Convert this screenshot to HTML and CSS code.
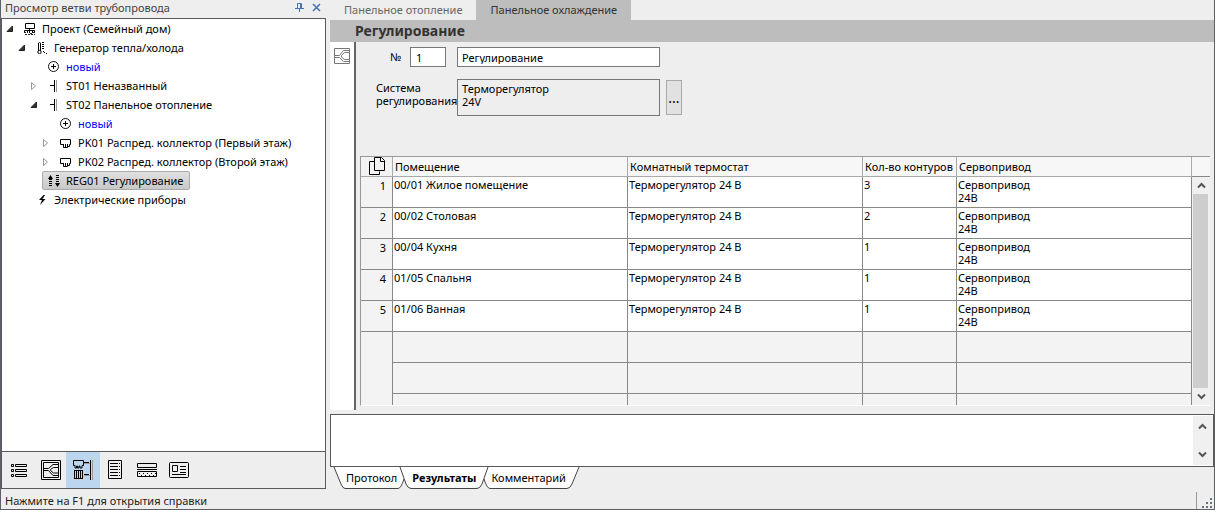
FILE: index.html
```html
<!DOCTYPE html>
<html lang="ru">
<head>
<meta charset="utf-8">
<title>Регулирование</title>
<link rel="stylesheet" href="styles.css">
</head>
<body>
<svg class="defs" aria-hidden="true">
  <symbol id="open" viewBox="0 0 8 8"><path d="M6.500 1v5.500H1z" fill="#333" stroke="#222"/></symbol>
  <symbol id="closed" viewBox="0 0 8 8"><path d="M1.500 .5v7L5.500 4z" fill="#fff" stroke="#999"/></symbol>
  <symbol id="plus" viewBox="0 0 12 12"><circle cx="5.500" cy="5.500" r="5" fill="none" stroke="#111"/><path d="M3 5.500h5M5.500 3v5" stroke="#000"/></symbol>
  <symbol id="branch" viewBox="0 0 12 12"><path d="M2 5.500h5M6.500 0v12" stroke="#000"/><path d="M8.500 0v12" stroke="#999"/></symbol>
  <symbol id="manifold" viewBox="0 0 12 12"><path d="M.5 2.500h10v5H9.500v2H7.500V7v3.500H5.500V7v3.500H3.500V7v.5H.5z" fill="none" stroke="#000"/></symbol>
  <symbol id="valve" viewBox="0 0 20 20"><path d="M.5.500h19v19H.5zM2.500 2.500h15v15h-15z" fill="none" stroke="currentColor"/><path d="M3 8.500h4.500L12 4.500h5M3 10.500h4.500L12 15.500h5M17 7.500h-4.500L9.500 9.500v1l3 2.500h4.500" fill="none" stroke="currentColor"/></symbol>
  <symbol id="up" viewBox="0 0 9 7"><path d="M1 5.500l3.500-3.500L8 5.500" fill="none" stroke="#555" stroke-width="2"/></symbol>
  <symbol id="down" viewBox="0 0 9 7"><path d="M1 1.500L4.500 5L8 1.500" fill="none" stroke="#555" stroke-width="2"/></symbol>
</svg>
<div class="window">
  <div class="workspace">
    <aside class="sidebar">
      <header class="panel-title">
        <span class="panel-name">Просмотр ветви трубопровода</span>
        <button class="plain" aria-label="Закрепить"><svg width="9" height="9"><path d="M2.500 5V.5h4V5M5.500 1v4M0 5.500h9M4.500 6v3" fill="none" stroke="#4472ad"/></svg></button>
        <button class="plain" aria-label="Закрыть"><svg width="9" height="9"><path d="M1 1l7 7M8 1L1 8" stroke="#4472ad" stroke-width="1.500"/></svg></button>
      </header>
      <ul class="tree">
        <li class="node l0"><svg class="arrow"><use href="#open"/></svg><svg class="ico"><path d="M1.500.5h9v5h-9zM.5 10V7.500h10V10M5.500 5.500v4.500M3.500 7.500V10M8.500 7.500V10" fill="none" stroke="#000"/><path d="M0 9.500h2M1 11.500h2M3 9.500h1M4 11.500h2M6 10.500h2M7 11.500h2M9 9.500h2M10 11.500h1" stroke="#222"/></svg><span>Проект (Семейный дом)</span></li>
        <li class="node l1"><svg class="arrow"><use href="#open"/></svg><svg class="ico"><path d="M2.500 9V1q1-1.500 2 0v8" fill="none" stroke="#000"/><circle cx="3.500" cy="10" r="1.700" fill="#fff" stroke="#000"/><path d="M6 .5h2M6 2.500h2M6 4.500h2M6 6.500h2M7 9.500h1M8 10.500h1M10 11.500h1" stroke="#000"/></svg><span>Генератор тепла/холода</span></li>
        <li class="node l2 new"><svg class="arrow"></svg><svg class="ico"><use href="#plus"/></svg><span>новый</span></li>
        <li class="node l2"><svg class="arrow"><use href="#closed"/></svg><svg class="ico"><use href="#branch"/></svg><span>ST01 Неназванный</span></li>
        <li class="node l2"><svg class="arrow"><use href="#open"/></svg><svg class="ico"><use href="#branch"/></svg><span>ST02 Панельное отопление</span></li>
        <li class="node l3 new"><svg class="arrow"></svg><svg class="ico"><use href="#plus"/></svg><span>новый</span></li>
        <li class="node l3"><svg class="arrow"><use href="#closed"/></svg><svg class="ico"><use href="#manifold"/></svg><span>PK01 Распред. коллектор (Первый этаж)</span></li>
        <li class="node l3"><svg class="arrow"><use href="#closed"/></svg><svg class="ico"><use href="#manifold"/></svg><span>PK02 Распред. коллектор (Второй этаж)</span></li>
        <li class="node l2 selected"><svg class="ico"><path d="M2.500 0L0 4h5zM9.500 12L7 8h5z"/><path d="M2.500 4v8M9.500 0v8" stroke="#000" stroke-width="3" stroke-dasharray="1 1"/></svg><span>REG01 Регулирование</span></li>
        <li class="node l1"><svg class="arrow"></svg><svg class="ico"><path d="M7.500 1L3 6h3L4 11L9.500 5H6.500L9 1z"/></svg><span>Электрические приборы</span></li>
      </ul>
      <nav class="tools" aria-label="Виды">
        <button class="tool" aria-label="Список"><svg width="20" height="20"><path d="M2.500 4.500h2v2h-2zM2.500 9.500h2v2h-2zM2.500 14.500h2v2h-2zM6.500 4.500h11v2h-11zM6.500 9.500h11v2h-11zM6.500 14.500h11v2h-11z" fill="none" stroke="#000"/></svg></button>
        <button class="tool" aria-label="Контуры"><svg width="20" height="20"><use href="#valve"/></svg></button>
        <button class="tool current" aria-label="Ветви"><svg width="20" height="20"><path d="M11 3.500h7M11 15.500h7M19.500 0v20" stroke="#999"/><path d="M.5.5h10v5H9V8H7V6H6v2H4.500V6H3.500v2H2V5.500H.5zM11 2.500h5M11 14.500h5M17.500 0v20" fill="none" stroke="#000"/><path d="M1.500 10v9M3.500 10v9M5.500 10v9M7.500 10v9M9.500 10v9M1 10.500h9M1 18.500h9" stroke="#000"/></svg></button>
        <button class="tool" aria-label="Отчёт"><svg width="20" height="20"><path d="M3.500.5h13v18h-13z" fill="none" stroke="#000"/><path d="M5 3.500h8M5 6.500h8M5 9.500h8M5 12.500h8M5 15.500h8M14 3.500h1M14 6.500h1M14 9.500h1M14 12.500h1M14 15.500h1" stroke="#000"/></svg></button>
        <button class="tool" aria-label="Слои"><svg width="20" height="20"><path d="M.5 3.500h19v4H.5zM0 9.500h20M.5 11.500h19v5H.5z" fill="none" stroke="#000"/><path d="M2 13.500h17M4 15.500h14" stroke="#000" stroke-dasharray="1 3"/></svg></button>
        <button class="tool" aria-label="Карточка"><svg width="20" height="20"><rect x=".5" y="2.500" width="19" height="15" rx="1" fill="none" stroke="#000"/><path d="M3.500 5.500h5v6h-5zM11 6.500h6M11 9.500h6M11 12.500h6M3 14.500h14" fill="none" stroke="#000"/></svg></button>
      </nav>
    </aside>
    <main class="main">
      <div class="tabs" role="tablist">
        <button class="tab" role="tab" aria-selected="false">Панельное отопление</button>
        <button class="tab active" role="tab" aria-selected="true">Панельное охлаждение</button>
      </div>
      <h1 class="heading">Регулирование</h1>
      <div class="editor">
        <div class="rail"><svg width="16" height="16" class="rail-icon"><path d="M.5.5h15v15H.5zM1 7.500h4.500L9.500 2.500H15M1 9.500h4.500L9.500 13.500H15M15 4.500h-4.500L7.500 7.500v1.500L10.500 11.500H15" fill="none" stroke="currentColor"/></svg></div>
        <div class="content">
          <form class="form">
            <label class="label num" for="no">№</label>
            <div class="fields"><input class="box short" id="no" value="1"><input class="box name" aria-label="Название" value="Регулирование"></div>
            <label class="label system" for="sys">Система регулирования</label>
            <div class="fields second"><textarea class="box area" id="sys" readonly>Терморегулятор
24V</textarea><button class="more" type="button">...</button></div>
          </form>
          <div class="grid">
            <table class="table">
              <thead><tr><th class="rowno"><svg width="17" height="19"><path d="M5.500 4.500h-5v13h10v-3" fill="none" stroke="#000"/><path d="M5.500.5h7l3 3v10h-10zM11.500 1v3.500h4" fill="none" stroke="#000"/></svg></th><th>Помещение</th><th>Комнатный термостат</th><th class="loops">Кол-во контуров</th><th>Сервопривод</th></tr></thead>
              <tbody>
                <tr><td class="rowno">1</td><td>00/01 Жилое помещение</td><td>Терморегулятор 24 В</td><td>3</td><td>Сервопривод<br>24В</td></tr>
                <tr><td class="rowno">2</td><td>00/02 Столовая</td><td>Терморегулятор 24 В</td><td>2</td><td>Сервопривод<br>24В</td></tr>
                <tr><td class="rowno">3</td><td>00/04 Кухня</td><td>Терморегулятор 24 В</td><td>1</td><td>Сервопривод<br>24В</td></tr>
                <tr><td class="rowno">4</td><td>01/05 Спальня</td><td>Терморегулятор 24 В</td><td>1</td><td>Сервопривод<br>24В</td></tr>
                <tr><td class="rowno">5</td><td>01/06 Ванная</td><td>Терморегулятор 24 В</td><td>1</td><td>Сервопривод<br>24В</td></tr>
                <tr class="empty"><td class="rowno" rowspan="3"></td><td></td><td></td><td></td><td></td></tr>
                <tr class="empty"><td></td><td></td><td></td><td></td></tr>
                <tr class="empty"><td></td><td></td><td></td><td></td></tr>
              </tbody>
            </table>
            <div class="scroll-col">
              <div class="corner"></div>
              <button class="scroll-btn" aria-label="Вверх"><svg width="9" height="7"><use href="#up"/></svg></button>
              <div class="thumb"></div>
              <button class="scroll-btn" aria-label="Вниз"><svg width="9" height="7"><use href="#down"/></svg></button>
            </div>
          </div>
        </div>
      </div>
      <section class="output">
        <div class="output-text"></div>
        <div class="output-scroll">
          <button class="scroll-btn" aria-label="Вверх"><svg width="9" height="7"><use href="#up"/></svg></button>
          <button class="scroll-btn" aria-label="Вниз"><svg width="9" height="7"><use href="#down"/></svg></button>
        </div>
      </section>
      <div class="sheets" role="tablist">
        <svg width="12" height="22"><path d="M1 0L8 17q2 4 4 4V0z" fill="#fff"/><path d="M1 0L8 17q2 4.500 4 4.500" fill="none" stroke="#444"/></svg>
        <button class="sheet" role="tab">Протокол</button>
        <svg width="13" height="22"><path d="M0 0h13v21q-3 0-6-9q-3 9-7 9z" fill="#fff"/><path d="M2 0l6 17q2 4.500 5 4.500M6 12q-3 9.500-6 9.500" fill="none" stroke="#444"/></svg>
        <button class="sheet active" role="tab" aria-selected="true">Результаты</button>
        <svg width="13" height="22"><path d="M0 0h13v21q-4 0-6-9q-3 9-7 9z" fill="#fff"/><path d="M11 0L5 17q-2 4.500-5 4.500M7 12q3 9.500 6 9.500" fill="none" stroke="#444"/></svg>
        <button class="sheet" role="tab">Комментарий</button>
        <svg width="13" height="22"><path d="M0 0h12L5 17q-2 4-5 4z" fill="#fff"/><path d="M12 0L5 17q-2 4.500-5 4.500" fill="none" stroke="#444"/></svg>
      </div>
    </main>
  </div>
  <footer class="status">
    <span class="status-text">Нажмите на F1 для открытия справки</span>
    <svg class="grip" width="18" height="17"><path d="M.5 0v17" stroke="#999"/><path d="M14 6h2v2h-2zM10 10h2v2h-2zM14 10h2v2h-2zM6 14h2v2H6zM10 14h2v2h-2zM14 14h2v2h-2z" fill="#68717b"/></svg>
  </footer>
</div>
</body>
</html>
```
FILE: styles.css
```css
* { box-sizing: border-box; }
body {
  margin: 0;
  font: 11px/13px "Noto Sans", "Open Sans", sans-serif;
  color: #000;
  background: #eee;
}
button, input, textarea { font: inherit; color: inherit; margin: 0; border-radius: 0; }
button { padding: 0; border: 0; background: none; }
svg { display: block; flex: none; }
.defs { position: absolute; width: 0; height: 0; }
.window {
  display: flex;
  flex-direction: column;
  height: 100vh;
  border: 1px solid #5b5f66;
  border-top: 0;
}
.workspace { display: flex; flex: 1; min-height: 0; }

.sidebar { display: flex; flex-direction: column; width: 325px; flex: none; padding-bottom: 2px; }
.panel-title {
  display: flex;
  align-items: center;
  gap: 8px;
  height: 18px;
  padding: 0 5px 3px 4px;
  color: #444;
}
.panel-name { flex: 1; }
.tree {
  flex: 1;
  margin: 0;
  padding: 0;
  list-style: none;
  background: #fff;
  border: 1px solid #5a5a5a;
}
.node { display: flex; align-items: center; height: 19px; white-space: nowrap; width: max-content; }
.arrow { width: 8px; height: 8px; margin-right: 10px; }
.ico { width: 12px; height: 12px; margin-right: 6px; }
.l0 { padding-left: 4px; }
.l1 { padding-left: 16px; }
.l2 { padding-left: 28px; }
.l3 { padding-left: 40px; }
.new { color: #00f; }
.selected {
  margin-left: 40px;
  padding: 0 6px 0 5px;
  border: 1px solid #aaa;
  border-radius: 2px;
  background: linear-gradient(#e0e0e0, #c8c8c8);
}
.tools {
  display: flex;
  height: 37px;
  padding: 0 1px;
  border: 1px solid #5a5a5a;
  border-top: 0;
}
.tool { display: flex; align-items: center; justify-content: center; width: 32px; }
.tool.current { width: 34px; margin: 0 -1px; background: #bcd6f0; }

.main { display: flex; flex-direction: column; flex: 1; min-width: 0; padding-left: 4px; }
.tabs { display: flex; height: 20px; }
.tab { padding: 0 14px 1px; color: #666; }
.tab.active { background: #bdbdbd; color: #333; }
.heading {
  margin: 0;
  padding: 0 25px;
  font-size: 14px;
  line-height: 22px;
  background: #bdbdbd;
  color: #333;
}
.editor { display: flex; flex: 1; min-height: 0; }
.rail {
  width: 26px;
  flex: none;
  padding: 6px 4px;
  background: #fff;
  border-right: 2px solid #666;
}
.rail-icon { color: #777; }
.content { display: flex; flex-direction: column; flex: 1; min-width: 0; padding: 5px 4px 4px; }
.form {
  display: grid;
  grid-template-columns: 81px 1fr;
  grid-template-rows: 20px 37px;
  row-gap: 12px;
  margin: 0 0 40px 20px;
  margin-left: 20px;
}
.form { margin-left: 16px; }
.label.num { padding: 3px 4px 0 14px; }
.label.system { padding-top: 2px; }
.fields { display: flex; gap: 11px; margin-left: -47px; }
.fields.second { margin-left: 0; gap: 6px; }
.box { border: 1px solid #777; padding: 0 5px; background: #fff; }
.short { width: 36px; }
.name { width: 203px; padding: 0 4px; }
.area { width: 203px; height: 37px; padding: 2px 4px; background: #eee; resize: none; overflow: hidden; }
.more { width: 16px; height: 35px; margin-top: 1px; border: 1px solid #aaa; background: #e1e1e1; font-size: 14px; }

.grid {
  display: flex;
  flex: 1;
  min-height: 0;
  overflow: hidden;
  border-top: 1px solid #999;
  border-left: 1px solid #999;
  border-bottom: 1px solid #fff;
  background: #f3f3f3;
}
.table { flex: 1; width: 100%; height: max-content; border-collapse: separate; border-spacing: 0; table-layout: fixed; }
.table th, .table td {
  padding: 1px;
  text-align: left;
  vertical-align: top;
  font-weight: normal;
  white-space: nowrap;
  border-right: 1px solid #888;
  border-bottom: 1px solid #888;
}
.table th { height: 20px; padding: 0 2px; vertical-align: middle; background: #f7f7f7; border-color: #aaa; }
.table td { height: 31px; background: #fff; }
.table .rowno { width: 32px; text-align: right; padding: 2px 6px 0 0; background: #f3f3f3; }
.table th.rowno { padding: 0 6px 0 8px; }
.table .loops { width: 94px; }
.table .empty td { background: #f3f3f3; }
.scroll-col { display: flex; flex-direction: column; width: 18px; flex: none; background: #f0f0f0; }
.corner { height: 20px; background: #f7f7f7; border-bottom: 1px solid #888; }
.scroll-btn { display: flex; align-items: center; justify-content: center; height: 17px; }
.thumb { flex: 1; margin: 0 2px 0 1px; background: #cdcdcd; }

.output {
  display: flex;
  height: 53px;
  margin-top: 4px;
  border: 1px solid #5a5a5a;
  background: #fff;
}
.output-text { flex: 1; }
.output-scroll { display: flex; flex-direction: column; justify-content: space-between; width: 20px; padding: 2px 1px 2px 0; margin: 1px 0; background: #f0f0f0; }
.sheets { display: flex; height: 24px; padding-left: 3px; }
.sheet { height: 22px; padding: 0 1px; background: #fff; border-bottom: 1px solid #444; }
.sheet.active { font-weight: bold; }

.status { display: flex; align-items: center; height: 18px; padding-left: 4px; color: #222; }
.status-text { flex: 1; }
```
